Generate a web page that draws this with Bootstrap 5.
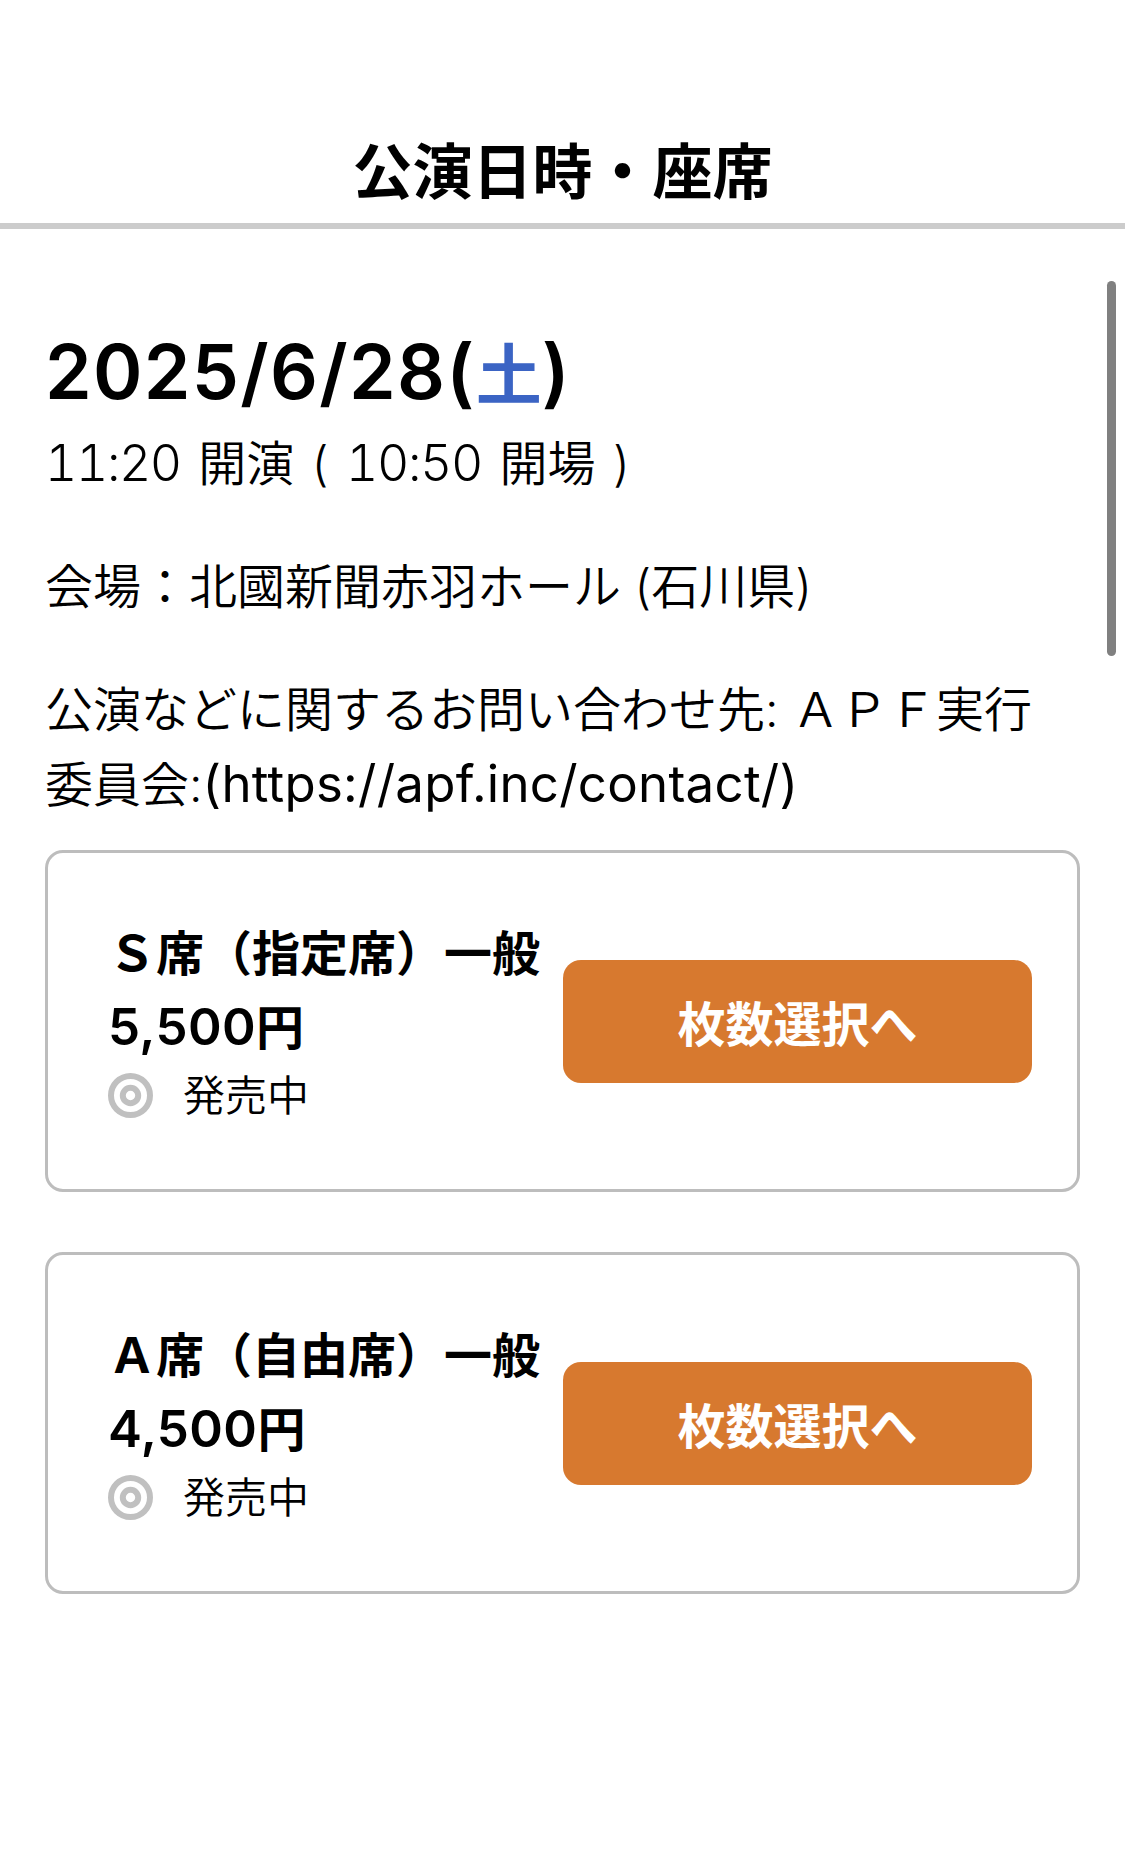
<!DOCTYPE html>
<html lang="ja">
<head>
<meta charset="utf-8">
<meta name="viewport" content="width=device-width, initial-scale=1">
<title>公演日時・座席</title>
<link href="https://cdn.jsdelivr.net/npm/bootstrap@5.3.0/dist/css/bootstrap.min.css" rel="stylesheet">
<style>
  body { font-family: Inter, "Noto Sans CJK JP", sans-serif; font-size: 48px; line-height: 75px; font-weight: 350; color: #000; background: #fff; min-height: 1860px; overflow: hidden; }
  .page-head { height: 229px; border-bottom: 6px solid #ccc; padding-bottom: 6px; }
  .page-title { font-size: 60px; line-height: 90px; font-weight: 700; }
  .page-main { padding: 92px 45px 0; }
  .show-date { font-size: 75px; line-height: 98px; font-weight: 600; margin-bottom: 5px; }
  .date-text { letter-spacing: 1.3px; }
  .saturday { font-family: "Noto Sans CJK JP", sans-serif; font-size: 66px; font-weight: 700; color: #3b64c4; }
  .show-time { word-spacing: 4px; }
  .time-num { font-size: 50px; line-height: 1; letter-spacing: -1.4px; font-feature-settings: "tnum"; }
  .contact-url { font-size: 51px; line-height: 1; font-weight: 400; letter-spacing: .25px; }
  .show-line { margin-bottom: 48px; }
  .seat-list { gap: 60px; margin-top: 28px; }
  .seat-card { height: 342px; border: 3px solid #bdbdbd; border-radius: 18px; padding: 60px 45px 0 60px; }
  .seat-info { width: 455px; }
  .seat-name { font-weight: 700; padding-top: 3px; }
  .seat-price { font-weight: 700; line-height: 73px; }
  .price-num { font-size: 51px; line-height: 1; font-weight: 600; letter-spacing: .4px; }
  .seat-state { height: 63px; gap: 30px; font-size: 42px; line-height: 63px; }
  .seat-btn { --bs-btn-bg: #d7792f; --bs-btn-color: #fff; --bs-btn-hover-bg: #c56c27; --bs-btn-hover-color: #fff; --bs-btn-border-width: 0; width: 469px; height: 123px; margin-top: 47px; padding: 6px 0 0; border-radius: 18px; font-size: 48px; font-weight: 700; line-height: 75px; }
  .scroll-thumb { top: 281px; right: 9px; width: 9px; height: 375px; background: #808080; }
</style>
<script src="https://cdn.jsdelivr.net/npm/bootstrap@5.3.0/dist/js/bootstrap.bundle.min.js"></script>
</head>
<body class="position-relative">
<header class="page-head d-flex align-items-end justify-content-center">
  <h1 class="page-title m-0">公演日時・座席</h1>
</header>
<main class="page-main">
  <h2 class="show-date text-nowrap"><span class="date-text">2025/6/28(</span><span class="saturday">土</span>)</h2>
  <p class="show-line show-time text-nowrap"><span class="time-num">11:20</span> 開演 ( <span class="time-num">10:50</span> 開場 )</p>
  <p class="show-line text-nowrap">会場：北國新聞赤羽ホール (石川県)</p>
  <p class="m-0 text-nowrap">公演などに関するお問い合わせ先: ＡＰＦ実行<br>委員会:<span class="contact-url">(https://apf.inc/contact/)</span></p>
  <div class="seat-list d-flex flex-column">
    <section class="seat-card d-flex align-items-start">
      <div class="seat-info text-nowrap">
        <div class="seat-name">Ｓ席（指定席）一般</div>
        <div class="seat-price"><span class="price-num">5,500</span>円</div>
        <div class="seat-state d-flex align-items-center">
          <svg width="45" height="45" viewBox="0 0 45 45" fill="none" stroke="#c0c0c0" stroke-width="6" aria-hidden="true"><circle cx="22.5" cy="22.5" r="19.5"/><circle cx="22.5" cy="22.5" r="7.7"/></svg>
          <span>発売中</span>
        </div>
      </div>
      <button type="button" class="btn seat-btn">枚数選択へ</button>
    </section>
    <section class="seat-card d-flex align-items-start">
      <div class="seat-info text-nowrap">
        <div class="seat-name">Ａ席（自由席）一般</div>
        <div class="seat-price"><span class="price-num">4,500</span>円</div>
        <div class="seat-state d-flex align-items-center">
          <svg width="45" height="45" viewBox="0 0 45 45" fill="none" stroke="#c0c0c0" stroke-width="6" aria-hidden="true"><circle cx="22.5" cy="22.5" r="19.5"/><circle cx="22.5" cy="22.5" r="7.7"/></svg>
          <span>発売中</span>
        </div>
      </div>
      <button type="button" class="btn seat-btn">枚数選択へ</button>
    </section>
  </div>
</main>
<div class="scroll-thumb position-absolute rounded-pill"></div>
</body>
</html>
